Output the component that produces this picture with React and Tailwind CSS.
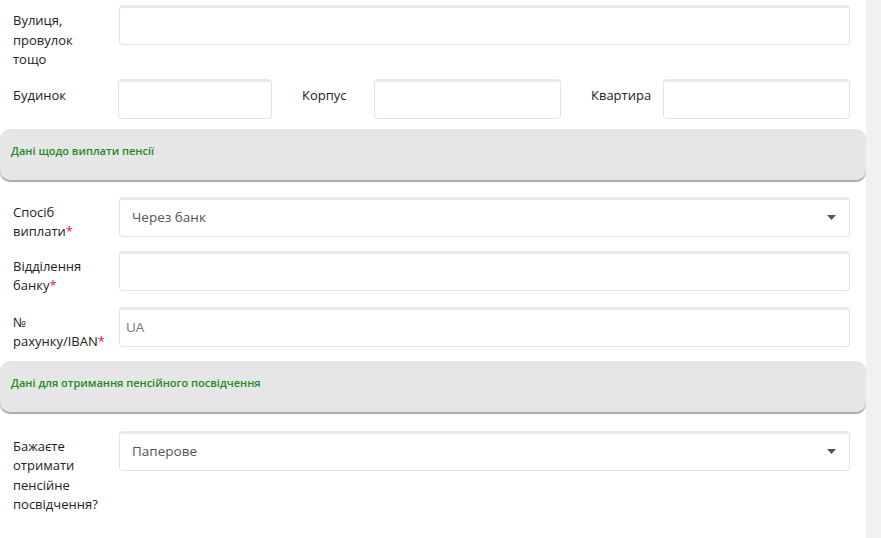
const inputCls =
  'h-[40px] rounded-[4px] border border-[#e3e3e3] border-t-[3px] border-t-[#e9e9e9] bg-white';

function Label({ children, required, className = '' }) {
  return (
    <div className={`text-[13px] leading-[19.5px] text-[#222] ${className}`}>
      {children}
      {required && <span className="text-[#e0241b]">*</span>}
    </div>
  );
}

function Field({ label, required, children, className = '' }) {
  return (
    <div className={`flex items-start pl-[13px] pr-[16px] ${className}`}>
      <div className="w-[106px] shrink-0 pt-[6px] pr-[12px]">
        <Label required={required}>{label}</Label>
      </div>
      <div className="flex-1">{children}</div>
    </div>
  );
}

function TextInput({ placeholder }) {
  return (
    <div className={`${inputCls} flex items-center px-[6px] text-[13.5px] text-[#777]`}>
      {placeholder}
    </div>
  );
}

function Select({ value }) {
  return (
    <div className={`${inputCls} flex items-center justify-between pl-[12px] pr-[12px] text-[13.5px] text-[#555]`}>
      <span>{value}</span>
      {/* стрелка селекта */}
      <svg width="9" height="5" viewBox="0 0 9 5" className="mr-[1px]">
        <path d="M0 0h9L4.5 5z" fill="#555" />
      </svg>
    </div>
  );
}

function SectionHeader({ title }) {
  return (
    <div className="h-[51px] rounded-[10px] bg-[#e6e6e6] shadow-[0_2px_1px_#a9a9a9] flex items-center pl-[11px] pb-[6px]">
      <span className="text-[11px] font-semibold text-[#218a21]">{title}</span>
    </div>
  );
}

export default function App() {
  return (
    <div
      className="flex w-[881px] h-[538px] overflow-hidden bg-white"
      style={{ fontFamily: '"Open Sans", "Noto Sans", sans-serif' }}
    >
      <div className="w-[866px] shrink-0">
        {/* адреса */}
        <Field label="Вулиця, провулок тощо" className="pt-[5px]">
          <TextInput />
        </Field>

        <div className="flex items-start pl-[13px] pr-[16px] mt-[9px]">
          <div className="w-[105px] shrink-0 pt-[7px]">
            <Label>Будинок</Label>
          </div>
          <div className={`${inputCls} w-[154px]`} />
          <div className="w-[102px] shrink-0 pt-[7px] pl-[30px]">
            <Label>Корпус</Label>
          </div>
          <div className={`${inputCls} w-[187px]`} />
          <div className="w-[102px] shrink-0 pt-[7px] pl-[30px]">
            <Label>Квартира</Label>
          </div>
          <div className={`${inputCls} flex-1`} />
        </div>

        <div className="mt-[10px]">
          <SectionHeader title="Дані щодо виплати пенсії" />
        </div>

        <Field label="Спосіб виплати" required className="mt-[17px]">
          <Select value="Через банк" />
        </Field>
        <Field label="Відділення банку" required className="mt-[9px]">
          <TextInput />
        </Field>
        <Field label="№ рахунку/IBAN" required className="mt-[11px]">
          <TextInput placeholder="UA" />
        </Field>

        <div className="mt-[9px]">
          <SectionHeader title="Дані для отримання пенсійного посвідчення" />
        </div>

        <Field label="Бажаєте отримати пенсійне посвідчення?" className="mt-[19px]">
          <Select value="Паперове" />
        </Field>
      </div>
      {/* полоса прокрутки */}
      <div className="flex-1 bg-[#f1f1f4]" />
    </div>
  );
}
